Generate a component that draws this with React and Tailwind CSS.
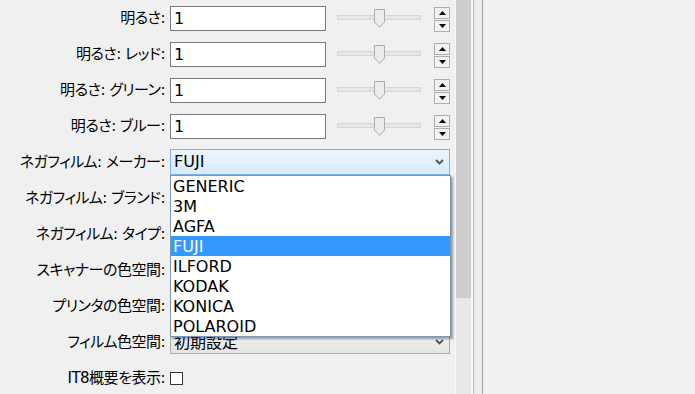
const Label = ({ children }) => (
  <div className="w-[170px] h-full pr-[5px] flex items-center justify-end whitespace-nowrap text-[15px] tracking-[-0.5px] [font-feature-settings:'palt']">
    {children}
  </div>
);

const Slider = () => (
  <div className="ml-[11px] mt-[9px] w-[84px] h-[19px] relative">
    <div className="absolute left-0 right-0 top-[6px] h-[5px] border border-[#d6d6d6] bg-[#e7e7e7]" />
    <svg className="absolute left-[37px] top-0" width="11" height="19" viewBox="0 0 11 19">
      <path d="M0.5 0.5 H10.5 V13 L5.5 18.3 L0.5 13 Z" fill="#ececec" stroke="#adadad" />
    </svg>
  </div>
);

const Spinner = () => (
  <div className="ml-[13px] mt-[7px] flex flex-col gap-[1px]">
    <div className="w-[16px] h-[12px] border border-[#adadad] bg-[#f2f2f2] flex items-center justify-center">
      <svg width="7" height="4" viewBox="0 0 7 4"><path d="M0 4 H7 L3.5 0 Z" fill="#000" /></svg>
    </div>
    <div className="w-[16px] h-[12px] border border-[#adadad] bg-[#f2f2f2] flex items-center justify-center">
      <svg width="7" height="4" viewBox="0 0 7 4"><path d="M0 0 H7 L3.5 4 Z" fill="#000" /></svg>
    </div>
  </div>
);

const Chevron = () => (
  <svg width="9" height="6" viewBox="0 0 9 6">
    <path d="M1 1 L4.5 4.5 L8 1" fill="none" stroke="#555" strokeWidth="1.8" />
  </svg>
);

export default function App() {
  const sliderRows = ["明るさ:", "明るさ: レッド:", "明るさ: グリーン:", "明るさ: ブルー:"];
  const comboRows = [
    { l: "ネガフィルム: ブランド:", v: "" },
    { l: "ネガフィルム: タイプ:", v: "" },
    { l: "スキャナーの色空間:", v: "" },
    { l: "プリンタの色空間:", v: "" },
    { l: "フィルム色空間:", v: "初期設定" },
  ];
  const items = ["GENERIC", "3M", "AGFA", "FUJI", "ILFORD", "KODAK", "KONICA", "POLAROID"];

  return (
    <div className="w-[695px] h-[394px] bg-[#f0f0f0] flex overflow-hidden font-['DejaVu_Sans','Noto_Sans_CJK_JP',sans-serif] text-[16px] text-black">
      <div className="w-[455px] shrink-0 relative">
        {sliderRows.map((l) => (
          <div key={l} className="h-[36px] flex">
            <Label>{l}</Label>
            <div className="mt-[6px] w-[156px] h-[25px] border border-[#7a7a7a] bg-white pl-[3px] leading-[23px]">1</div>
            <Slider />
            <Spinner />
          </div>
        ))}
        <div className="h-[36px] flex">
          <Label>ネガフィルム: メーカー:</Label>
          <div className="mt-[5px] w-[280px] h-[26px] border border-[#7eb4ea] bg-gradient-to-b from-[#ecf4fc] to-[#d9eafa] flex items-center justify-between pl-[3px] pr-[5px]">
            <span>FUJI</span>
            <Chevron />
          </div>
        </div>
        {comboRows.map((r) => (
          <div key={r.l} className="h-[36px] flex">
            <Label>{r.l}</Label>
            <div className="mt-[6px] w-[280px] h-[24px] border border-[#acacac] bg-gradient-to-b from-[#f0f0f0] to-[#e5e5e5] flex items-center justify-between pl-[3px] pr-[5px] [font-feature-settings:'palt']">
              <span className="pt-[2px]">{r.v}</span>
              <Chevron />
            </div>
          </div>
        ))}
        <div className="h-[36px] flex">
          <Label>IT8概要を表示:</Label>
          <div className="mt-[12px] w-[13px] h-[13px] border border-[#333] bg-white" />
        </div>

        <div className="absolute left-[170px] top-[175px] w-[281px] h-[162px] border border-[#7a98b4] bg-white shadow-[2px_2px_2px_rgba(40,60,80,0.45)] z-10">
          {items.map((it) => (
            <div
              key={it}
              className={
                it === "FUJI"
                  ? "h-[20px] leading-[22px] pl-[2px] bg-[#3399ff] text-white"
                  : "h-[20px] leading-[22px] pl-[2px]"
              }
            >
              {it}
            </div>
          ))}
        </div>
      </div>

      <div className="w-[16px] shrink-0 flex flex-col border-l border-[#f8f8f8] bg-[#e8e8e8]">
        <div className="h-[298px] bg-[#cdcdcd]" />
      </div>
      <div className="w-[2px] shrink-0 bg-[#f7f7f7]" />
      <div className="w-[1px] shrink-0 bg-[#bcbcbc]" />
      <div className="w-[8px] shrink-0 bg-[#ececec]" />
      <div className="w-[1px] shrink-0 bg-[#a0a0a0]" />
      <div className="flex-1 bg-[#f0f0f0]" />
    </div>
  );
}
